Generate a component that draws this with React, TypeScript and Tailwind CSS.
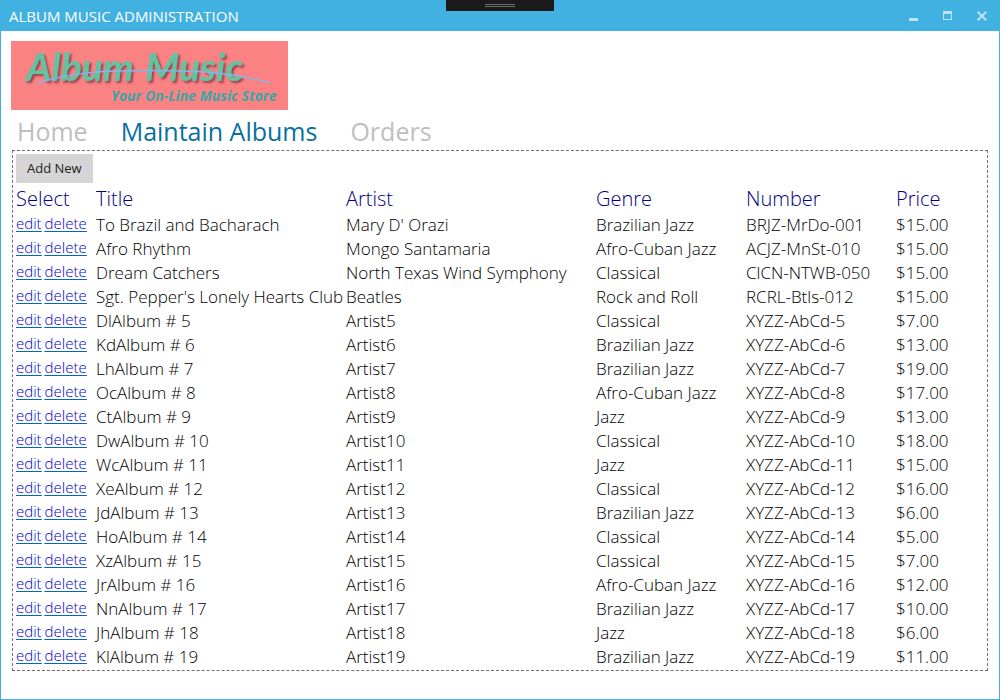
type Album = {
  title: string;
  artist: string;
  genre: string;
  number: string;
  price: string;
};

const albums: Album[] = [
  { title: "To Brazil and Bacharach", artist: "Mary D' Orazi", genre: "Brazilian Jazz", number: "BRJZ-MrDo-001", price: "$15.00" },
  { title: "Afro Rhythm", artist: "Mongo Santamaria", genre: "Afro-Cuban Jazz", number: "ACJZ-MnSt-010", price: "$15.00" },
  { title: "Dream Catchers", artist: "North Texas Wind Symphony", genre: "Classical", number: "ClCN-NTWB-050", price: "$15.00" },
  { title: "Sgt. Pepper's Lonely Hearts Club", artist: "Beatles", genre: "Rock and Roll", number: "RCRL-Btls-012", price: "$15.00" },
  { title: "DlAlbum # 5", artist: "Artist5", genre: "Classical", number: "XYZZ-AbCd-5", price: "$7.00" },
  { title: "KdAlbum # 6", artist: "Artist6", genre: "Brazilian Jazz", number: "XYZZ-AbCd-6", price: "$13.00" },
  { title: "LhAlbum # 7", artist: "Artist7", genre: "Brazilian Jazz", number: "XYZZ-AbCd-7", price: "$19.00" },
  { title: "OcAlbum # 8", artist: "Artist8", genre: "Afro-Cuban Jazz", number: "XYZZ-AbCd-8", price: "$17.00" },
  { title: "CtAlbum # 9", artist: "Artist9", genre: "Jazz", number: "XYZZ-AbCd-9", price: "$13.00" },
  { title: "DwAlbum # 10", artist: "Artist10", genre: "Classical", number: "XYZZ-AbCd-10", price: "$18.00" },
  { title: "WcAlbum # 11", artist: "Artist11", genre: "Jazz", number: "XYZZ-AbCd-11", price: "$15.00" },
  { title: "XeAlbum # 12", artist: "Artist12", genre: "Classical", number: "XYZZ-AbCd-12", price: "$16.00" },
  { title: "JdAlbum # 13", artist: "Artist13", genre: "Brazilian Jazz", number: "XYZZ-AbCd-13", price: "$6.00" },
  { title: "HoAlbum # 14", artist: "Artist14", genre: "Classical", number: "XYZZ-AbCd-14", price: "$5.00" },
  { title: "XzAlbum # 15", artist: "Artist15", genre: "Classical", number: "XYZZ-AbCd-15", price: "$7.00" },
  { title: "JrAlbum # 16", artist: "Artist16", genre: "Afro-Cuban Jazz", number: "XYZZ-AbCd-16", price: "$12.00" },
  { title: "NnAlbum # 17", artist: "Artist17", genre: "Brazilian Jazz", number: "XYZZ-AbCd-17", price: "$10.00" },
  { title: "JhAlbum # 18", artist: "Artist18", genre: "Jazz", number: "XYZZ-AbCd-18", price: "$6.00" },
  { title: "KlAlbum # 19", artist: "Artist19", genre: "Brazilian Jazz", number: "XYZZ-AbCd-19", price: "$11.00" },
];

function TitleBar() {
  return (
    <header className="relative flex h-[31px] items-center justify-between bg-[#41b1e1] pr-3 pl-2 text-white">
      <span className="text-[15px] leading-5">ALBUM MUSIC ADMINISTRATION</span>
      <div className="absolute top-0 left-1/2 flex h-[11px] w-[108px] -translate-x-1/2 flex-col items-center gap-px bg-[#1b1b1c] pt-1">
        <span className="h-px w-[30px] bg-[#6a6a6a]" />
        <span className="h-px w-[30px] bg-[#6a6a6a]" />
      </div>
      <div className="flex items-center gap-[25px] text-[#bfe4f5]">
        <button type="button" aria-label="Minimize">
          <svg className="block" width="9" height="10" viewBox="0 0 9 10" fill="currentColor" shapeRendering="crispEdges">
            <rect x="0" y="7" width="9" height="3" />
          </svg>
        </button>
        <button type="button" aria-label="Maximize">
          <svg className="block" width="9" height="10" viewBox="0 0 9 10" fill="currentColor" shapeRendering="crispEdges">
            <path fillRule="evenodd" d="M0 0h9v9H0zM1 3v5h7V3z" />
          </svg>
        </button>
        <button type="button" aria-label="Close">
          <svg className="block" width="10" height="10" viewBox="0 0 10 10" fill="none" stroke="currentColor" strokeWidth="2">
            <path d="M0.7 0.7 9.3 9.3M9.3 0.7 0.7 9.3" />
          </svg>
        </button>
      </div>
    </header>
  );
}

function Logo() {
  return (
    <svg
      className="block"
      width="277"
      height="69"
      viewBox="0 0 277 69"
      role="img"
      aria-label="Album Music, Your On-Line Music Store"
    >
      <defs>
        <filter id="shadow" x="-10%" y="-20%" width="130%" height="150%">
          <feDropShadow dx="2" dy="2" stdDeviation="1" floodColor="#7c2f45" floodOpacity="0.8" />
        </filter>
      </defs>
      <rect width="277" height="69" fill="#fa8282" />
      <g className="font-['Lato',sans-serif] text-[39px] font-bold italic" fill="#63c3a0" filter="url(#shadow)">
        <text x="15" y="40">Album</text>
        <text x="134" y="40">Music</text>
      </g>
      <path d="M27 42C62 31 92 29.500 134 29.500S218 30 259 42" fill="none" stroke="#86b4ec" strokeWidth="1.400" />
      <text
        x="100"
        y="60"
        className="font-['Open_Sans',sans-serif] text-sm font-bold italic"
        fill="#3aa6a6"
      >
        Your On-Line Music Store
      </text>
    </svg>
  );
}

function Navigation() {
  return (
    <nav className="flex gap-[33px] pt-0.5 pl-[6px] text-[25px] leading-[38px] text-[#bebebe]">
      <a href="#home">Home</a>
      <a href="#albums" aria-current="page" className="text-[#086f9e]">Maintain Albums</a>
      <a href="#orders">Orders</a>
    </nav>
  );
}

function AlbumTable() {
  return (
    <table className="w-full table-fixed border-collapse text-left text-[17px] font-light whitespace-nowrap text-black">
      <colgroup>
        <col className="w-[80px]" />
        <col className="w-[250px]" />
        <col className="w-[250px]" />
        <col className="w-[150px]" />
        <col className="w-[150px]" />
        <col />
      </colgroup>
      <thead className="text-xl text-[#000080]">
        <tr className="h-[30px]">
          <th className="p-0 pt-0.5 font-light">Select</th>
          <th className="p-0 pt-0.5 font-light">Title</th>
          <th className="p-0 pt-0.5 font-light">Artist</th>
          <th className="p-0 pt-0.5 font-light">Genre</th>
          <th className="p-0 pt-0.5 font-light">Number</th>
          <th className="p-0 pt-0.5 font-light">Price</th>
        </tr>
      </thead>
      <tbody>
        {albums.map((album) => (
          <tr key={album.title} className="h-6 leading-6">
            <td className="p-0 align-top text-[15px] leading-5">
              <span className="flex gap-[3px] text-[#0000d0] underline decoration-[#0066cc] underline-offset-2">
                <a href="#edit" aria-label={`edit ${album.title}`}>edit</a>
                <a href="#delete" aria-label={`delete ${album.title}`}>delete</a>
              </span>
            </td>
            <td className="p-0">{album.title}</td>
            <td className="p-0">{album.artist}</td>
            <td className="p-0">{album.genre}</td>
            <td className="p-0">{album.number}</td>
            <td className="p-0">{album.price}</td>
          </tr>
        ))}
      </tbody>
    </table>
  );
}

export default function App() {
  return (
    <div className="min-h-screen border border-t-0 border-[#41b1e1] bg-white font-['Open_Sans','Noto_Sans',sans-serif]">
      <TitleBar />
      <main className="px-[10px] pt-[10px]">
        <Logo />
        <Navigation />
        <section className="mr-px ml-px border border-dashed border-[#707070] px-[3px] pt-[3px] pb-px">
          <button type="button" className="block h-[29px] bg-[#d5d5d5] px-[11px] text-[13px] text-[#222222]">
            Add New
          </button>
          <AlbumTable />
        </section>
      </main>
    </div>
  );
}
